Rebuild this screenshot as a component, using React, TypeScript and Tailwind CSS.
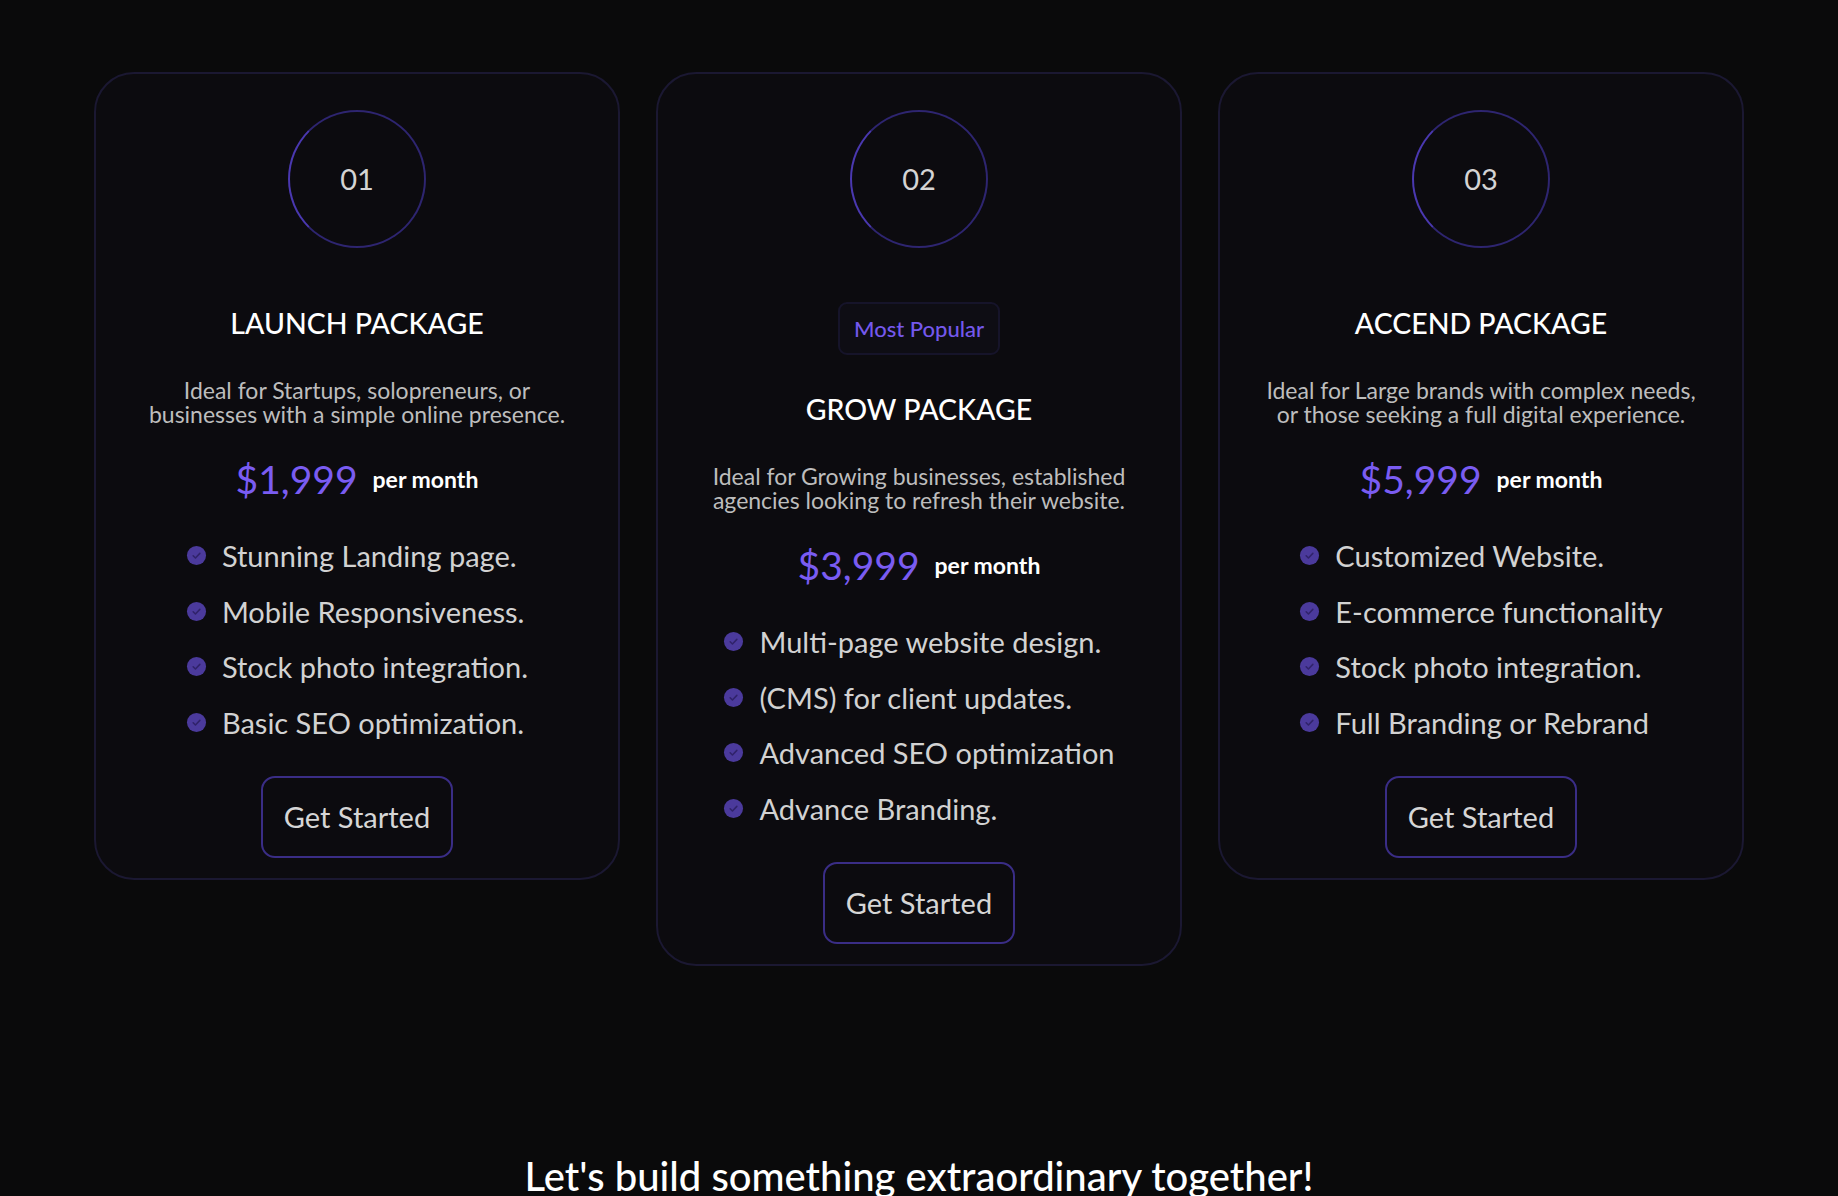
import React from "react";

type Plan = {
  num: string;
  title: string;
  desc: string[];
  price: string;
  features: string[];
  popular?: boolean;
};

const plans: Plan[] = [
  {
    num: "01",
    title: "LAUNCH PACKAGE",
    desc: ["Ideal for Startups, solopreneurs, or", "businesses with a simple online presence."],
    price: "$1,999",
    features: [
      "Stunning Landing page.",
      "Mobile Responsiveness.",
      "Stock photo integration.",
      "Basic SEO optimization.",
    ],
  },
  {
    num: "02",
    title: "GROW PACKAGE",
    desc: ["Ideal for Growing businesses, established", "agencies looking to refresh their website."],
    price: "$3,999",
    popular: true,
    features: [
      "Multi-page website design.",
      "(CMS) for client updates.",
      "Advanced SEO optimization",
      "Advance Branding.",
    ],
  },
  {
    num: "03",
    title: "ACCEND PACKAGE",
    desc: ["Ideal for Large brands with complex needs,", "or those seeking a full digital experience."],
    price: "$5,999",
    features: [
      "Customized Website.",
      "E-commerce functionality",
      "Stock photo integration.",
      "Full Branding or Rebrand",
    ],
  },
];

/** Small filled check bullet */
function CheckDot() {
  return (
    <svg width="21" height="21" viewBox="0 0 22 22" className="shrink-0">
      <circle cx="11" cy="11" r="10" fill="#4b3a9c" />
      <path d="M7.5 11.2l2.4 2.4 4.6-4.8" fill="none" stroke="#30236a" strokeWidth="1.6" strokeLinecap="round" strokeLinejoin="round" />
    </svg>
  );
}

function PlanCard({ plan }: { plan: Plan }) {
  return (
    <div className="w-[526px] rounded-[40px] border-2 border-[#1b1832] bg-[#0c0b0f] pt-[36px] pb-[20px] flex flex-col items-center">
      {/* Number ring */}
      <div className="w-[138px] h-[138px] rounded-full border-2 border-[#2e2570] border-l-[#4a38b0] flex items-center justify-center">
        <span className="text-[29px] text-[#d4d4d4]">{plan.num}</span>
      </div>

      {plan.popular && (
        <div className="mt-[54px] h-[53px] px-[14px] rounded-[9px] border-2 border-[#16142a] bg-[#0e0d14] flex items-center">
          <span className="text-[22px] font-medium text-[#7458ec]">Most Popular</span>
        </div>
      )}

      <h3 className={`${plan.popular ? "mt-[38px]" : "mt-[59px]"} text-[28.5px] leading-[32px] font-medium text-white`}>
        {plan.title}
      </h3>

      <p className="mt-[39px] text-center text-[23px] leading-[24px] text-[#bdbdbd]">
        {plan.desc[0]}
        <br />
        {plan.desc[1]}
      </p>

      <div className="mt-[29px] flex items-center gap-[15px] h-[48px]">
        <span className="text-[39px] leading-[48px] text-[#7a5cf2]">{plan.price}</span>
        <span className="text-[23px] font-bold text-white">per month</span>
      </div>

      <ul className="mt-[25px] w-fit">
        {plan.features.map((f) => (
          <li key={f} className="flex items-center gap-[15px] h-[55.5px]">
            <CheckDot />
            <span className="text-[29px] text-[#d2d2d2]">{f}</span>
          </li>
        ))}
      </ul>

      <button className="mt-[26px] w-[192px] h-[82px] rounded-[14px] border-2 border-[#3a2d86] text-[29px] text-[#d6d6d6]">
        Get Started
      </button>
    </div>
  );
}

export default function App() {
  return (
    <div className="min-h-screen w-full overflow-hidden bg-[#0a0a0b] font-['Lato',sans-serif]" style={{ height: 1196 }}>
      <section className="flex justify-center items-start gap-[36px] pt-[72px]">
        {plans.map((p) => (
          <PlanCard key={p.num} plan={p} />
        ))}
      </section>

      <h2 className="mt-[186px] text-center text-[40px] leading-[48px] font-medium text-white">
        Let's build something extraordinary together!
      </h2>
    </div>
  );
}
